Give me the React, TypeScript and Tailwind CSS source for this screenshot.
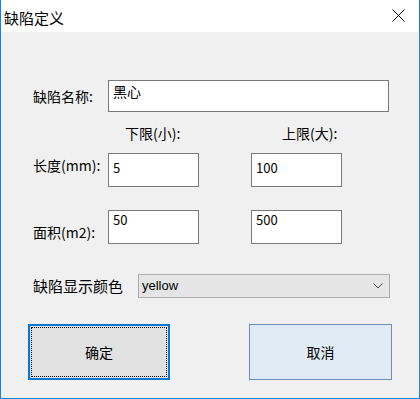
import React from 'react';

const cjk = "font-['SimSun','Noto_Sans_CJK_SC','Liberation_Sans',sans-serif]";

function TextBox({ value, className }: { value: string; className: string }) {
  return (
    <div className={`bg-white border border-[#7a7a7a] pl-[4px] pt-[6px] text-[13px] leading-[16px] text-black ${className}`}>
      {value}
    </div>
  );
}

export default function App() {
  return (
    <div className={`w-[420px] h-[399px] flex flex-col bg-white border-x border-b border-[#1783d6] ${cjk}`}>
      {/* Title bar */}
      <div className="h-[32px] flex items-center justify-between bg-white pl-[3px] pr-[14px] shrink-0">
        <span className="text-[15px] text-black leading-none mt-[2px]">缺陷定义</span>
        <svg width="13" height="13" viewBox="0 0 13 13" className="mt-[-1px]">
          <path d="M0.5 0.5 L12.5 12.5 M12.5 0.5 L0.5 12.5" stroke="#000" strokeWidth="1" fill="none" />
        </svg>
      </div>

      {/* Body */}
      <div className="flex-1 bg-[#f0f0f0] flex flex-col pl-[32px] text-[15px] text-black">
        {/* Name */}
        <div className="flex items-center mt-[48px] h-[32px]">
          <span className="w-[75px] text-[14px]">缺陷名称:</span>
          <div className="w-[281px] h-[32px] bg-white border border-[#7a7a7a] pl-[4px] pt-[1px] text-[14px] leading-[18px]">黑心</div>
        </div>

        {/* Headers */}
        <div className="flex h-[20px] mt-[11px] items-center text-[14px]">
          <span className="ml-[92px] w-[157px]">下限(小):</span>
          <span>上限(大):</span>
        </div>

        {/* Length */}
        <div className="flex mt-[10px] h-[34px]">
          <span className="w-[75px] text-[14px] pt-[2px]">长度(mm):</span>
          <TextBox value="5" className="w-[91px] h-[34px]" />
          <TextBox value="100" className="w-[91px] h-[34px] ml-[52px]" />
        </div>

        {/* Area */}
        <div className="flex mt-[23px] h-[34px]">
          <span className="w-[75px] text-[14px] pt-[12px]">面积(m2):</span>
          <TextBox value="50" className="w-[91px] h-[34px] !pt-[1px]" />
          <TextBox value="500" className="w-[91px] h-[34px] ml-[52px] !pt-[1px]" />
        </div>

        {/* Color */}
        <div className="flex items-center mt-[30px] h-[24px]">
          <span className="w-[105px] text-[15px]">缺陷显示颜色</span>
          <div className="w-[252px] h-[24px] bg-[#e5e5e5] border border-[#adadad] flex items-center justify-between pl-[3px] pr-[6px]">
            <span className="text-[13px] font-['Liberation_Sans',sans-serif]">yellow</span>
            <svg width="10" height="6" viewBox="0 0 10 6">
              <path d="M0.5 0.5 L5 5 L9.5 0.5" stroke="#444" strokeWidth="1" fill="none" />
            </svg>
          </div>
        </div>

        {/* Buttons */}
        <div className="flex mt-[26px] ml-[-5px] h-[56px]">
          <div className="w-[142px] h-[56px] border-2 border-[#0078d7] bg-[#e1e1e1] p-[1px]">
            <div className="w-full h-full border border-dotted border-black flex items-center justify-center text-[14px]">
              确定
            </div>
          </div>
          <div className="w-[143px] h-[56px] ml-[79px] border border-[#6d8fb5] bg-[#e1ebf5] flex items-center justify-center text-[14px]">
            取消
          </div>
        </div>
      </div>
    </div>
  );
}
